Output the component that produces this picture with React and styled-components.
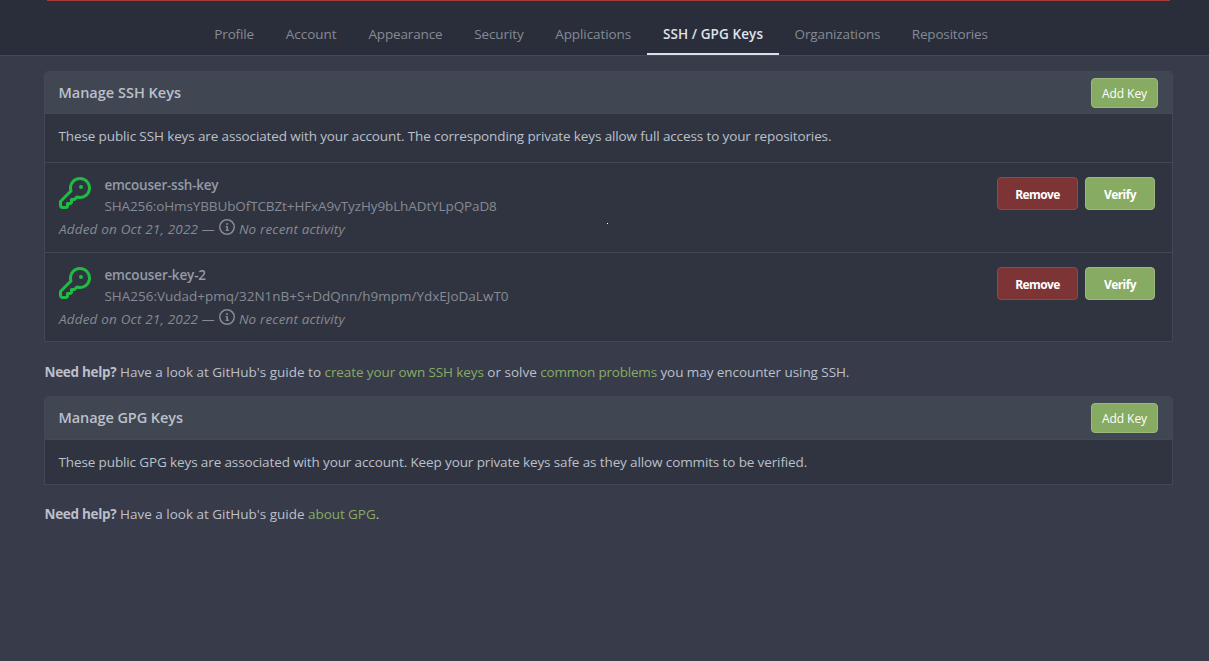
import React from "react";
import styled, { createGlobalStyle } from "styled-components";

const GlobalStyle = createGlobalStyle`
  * { box-sizing: border-box; }
  body {
    margin: 0;
    background: #383b4a;
    color: #bbc0ca;
    font: 13.5px/21px "Open Sans", "Noto Sans", sans-serif;
  }
`;

const Page = styled.div`
  position: relative;
  min-height: 661px;
`;

const Header = styled.header`
  height: 56px;
  background: #2a2e3a;
  border-bottom: 1px solid #454856;
`;

const AlertEdge = styled.div`
  height: 1px;
  margin: 0 39px 0 47px;
  background: #a83a38;
`;

const Tabs = styled.nav`
  display: flex;
  height: 54px;
  padding-left: 198.4px;
`;

const Tab = styled.a`
  width: ${(p) => p.$width}px;
  padding-top: 23px;
  text-align: center;
  white-space: nowrap;
  letter-spacing: ${(p) => p.$track || 0}px;
  color: ${(p) => (p.$active ? "#dfe3ec" : "#868a94")};
  font-weight: ${(p) => (p.$active ? 600 : 400)};
  border-bottom: 2px solid ${(p) => (p.$active ? "#dbdfe7" : "transparent")};
`;

const Main = styled.main`
  padding: 15px 36px 0 44px;
`;

const Panel = styled.section`
  border: 1px solid #454854;
  border-radius: 4px 4px 0 0;
  background: #303440;
`;

const PanelHeader = styled.div`
  display: flex;
  align-items: center;
  justify-content: space-between;
  height: ${(p) => p.$height}px;
  padding: 0 14px 0 13.4px;
  background: #404652;
  border-bottom: 1px solid #454a56;
  border-radius: 3px 3px 0 0;
`;

const Title = styled.h4`
  margin: 0;
  height: 22px;
  font-size: 14.5px;
  font-weight: 600;
  letter-spacing: ${(p) => p.$track || 0}px;
`;

const Button = styled.button`
  display: flex;
  align-items: center;
  justify-content: center;
  width: ${(p) => p.$width}px;
  height: ${(p) => (p.$small ? 30 : 33)}px;
  padding: ${(p) => (p.$small ? "1px 0 0" : "1px 0 0")};
  border: 1px solid ${(p) => (p.$danger ? "#914848" : "#9dba7e")};
  border-radius: 4px;
  background: ${(p) => (p.$danger ? "#7d3434" : "#87ab63")};
  color: #fff;
  font: ${(p) => (p.$small ? 400 : 700)} 12px "Open Sans", sans-serif;
  letter-spacing: ${(p) => (p.$small ? -0.07 : -0.6)}px;
`;

const Description = styled.div`
  height: ${(p) => p.$height}px;
  padding: 12px 13.5px 0;
  letter-spacing: ${(p) => p.$track}px;
  white-space: nowrap;
`;

const KeyRow = styled.div`
  display: flex;
  justify-content: space-between;
  height: ${(p) => p.$height}px;
  padding: 14px 17px 0 14px;
  border-top: 1px solid #454854;
`;

const KeyInfo = styled.div`
  color: #868a94;
`;

const KeySummary = styled.div`
  display: flex;
  gap: 13.4px;
  height: 41px;
`;

const KeyName = styled.div`
  height: 20px;
  line-height: 16px;
  font-weight: 600;
  color: #949aa8;
  letter-spacing: ${(p) => p.$track}px;
`;

const Fingerprint = styled.div`
  line-height: 19px;
  letter-spacing: ${(p) => p.$track}px;
`;

const Activity = styled.div`
  display: flex;
  align-items: center;
  gap: 4px;
  height: 22px;
  font-style: italic;
`;

const Actions = styled.div`
  display: flex;
  gap: 7px;
`;

const Help = styled.p`
  margin: ${(p) => (p.$last ? 19 : 20)}px 0 ${(p) => (p.$last ? 0 : 13)}px;
  padding-left: 0.5px;
  height: 21px;
  white-space: nowrap;
`;

const Strong = styled.strong`
  font-weight: 700;
  letter-spacing: -0.3px;
`;

const Link = styled.a`
  color: #87ab63;
  letter-spacing: ${(p) => p.$track}px;
`;

const Track = styled.span`
  letter-spacing: ${(p) => p.$value}px;
`;

const Icon = styled.svg`
  display: block;
  flex: none;
  fill: currentColor;
  color: ${(p) => p.$color};
`;

const InfoIcon = styled(Icon)`
  margin-top: -5px;
`;

const Speck = styled.i`
  position: absolute;
  left: 607px;
  top: 223px;
  width: 1px;
  height: 1px;
  background: #fff;
`;

const tabs = [
  ["Profile", 71.5, -0.15],
  ["Account", 82.5, 0],
  ["Appearance", 106, -0.15],
  ["Security", 81, -0.1],
  ["Applications", 107.6, -0.08],
  ["SSH / GPG Keys", 132, 0.09],
  ["Organizations", 117, -0.13],
  ["Repositories", 107.5, -0.17],
];

const keys = [
  ["emcouser-ssh-key", -0.22, "SHA256:oHmsYBBUbOfTCBZt+HFxA9vTyzHy9bLhADtYLpQPaD8", -0.11, 90],
  ["emcouser-key-2", -0.14, "SHA256:Vudad+pmq/32N1nB+S+DdQnn/h9mpm/YdxEJoDaLwT0", 0, 89],
];

function KeyItem({ item: [name, nameTrack, print, printTrack, height] }) {
  return (
    <KeyRow $height={height}>
      <KeyInfo>
        <KeySummary>
          <Icon width="32" height="32" viewBox="0 0 16 16" $color="#21ba45">
            <path
              fillRule="evenodd"
              d="M6.5 5.5a4 4 0 112.731 3.795.75.75 0 00-.768.18L7.44 10.5H6.25a.75.75 0 00-.75.75v1.19l-.06.06H4.25a.75.75 0 00-.75.75v1.19l-.06.06H1.75a.25.25 0 01-.25-.25v-1.69l5.024-5.023a.75.75 0 00.181-.768A3.995 3.995 0 016.5 5.5zm4-5.5a5.5 5.5 0 00-5.348 6.788L.22 11.72a.75.75 0 00-.22.53v2C0 15.216.784 16 1.75 16h2a.75.75 0 00.53-.22l.5-.5a.75.75 0 00.22-.53V14h.75a.75.75 0 00.53-.22l.5-.5a.75.75 0 00.22-.53V12h.75a.75.75 0 00.53-.22l.932-.932A5.5 5.5 0 1010.5 0zm.5 6a1 1 0 100-2 1 1 0 000 2z"
            />
          </Icon>
          <div>
            <KeyName $track={nameTrack}>{name}</KeyName>
            <Fingerprint $track={printTrack}>{print}</Fingerprint>
          </div>
        </KeySummary>
        <Activity>
          <Track $value={0.18}>Added on Oct 21, 2022 —</Track>
          <InfoIcon width="16" height="16" viewBox="0 0 16 16" $color="#868a94">
            <path
              fillRule="evenodd"
              d="M8 1.5a6.5 6.5 0 100 13 6.5 6.5 0 000-13zM0 8a8 8 0 1116 0A8 8 0 010 8zm6.5-.25A.75.75 0 017.25 7h1a.75.75 0 01.75.75v2.75h.25a.75.75 0 010 1.5h-2a.75.75 0 010-1.5h.25v-2h-.25a.75.75 0 01-.75-.75zM8 6a1 1 0 100-2 1 1 0 000 2z"
            />
          </InfoIcon>
          <Track $value={0.15}>No recent activity</Track>
        </Activity>
      </KeyInfo>
      <Actions>
        <Button $danger $width={81}>Remove</Button>
        <Button $width={70}>Verify</Button>
      </Actions>
    </KeyRow>
  );
}

export default function App() {
  return (
    <Page>
      <GlobalStyle />
      <Header>
        <AlertEdge />
        <Tabs>
          {tabs.map(([label, width, track]) => (
            <Tab key={label} $width={width} $track={track} $active={label.startsWith("SSH")}>
              {label}
            </Tab>
          ))}
        </Tabs>
      </Header>
      <Main>
        <Panel>
          <PanelHeader $height={42}>
            <Title>Manage SSH Keys</Title>
            <Button $small $width={67}>Add Key</Button>
          </PanelHeader>
          <Description $height={48} $track={-0.118}>
            These public SSH keys are associated with your account. The corresponding private keys allow full access to your repositories.
          </Description>
          {keys.map((item) => (
            <KeyItem key={item[0]} item={item} />
          ))}
        </Panel>
        <Help>
          <Strong>Need help?</Strong> Have a look at GitHub's guide to{" "}
          <Link $track={-0.1}>create your own SSH keys</Link> or solve{" "}
          <Link $track={-0.2}>common problems</Link>{" "}
          <Track $value={-0.07}>you may encounter using SSH.</Track>
        </Help>
        <Panel>
          <PanelHeader $height={43}>
            <Title $track={-0.08}>Manage GPG Keys</Title>
            <Button $small $width={67}>Add Key</Button>
          </PanelHeader>
          <Description $height={44} $track={-0.122}>
            These public GPG keys are associated with your account. Keep your private keys safe as they allow commits to be verified.
          </Description>
        </Panel>
        <Help $last>
          <Strong>Need help?</Strong> Have a look at GitHub's guide <Link $track={-0.08}>about GPG</Link>.
        </Help>
      </Main>
      <Speck />
    </Page>
  );
}
